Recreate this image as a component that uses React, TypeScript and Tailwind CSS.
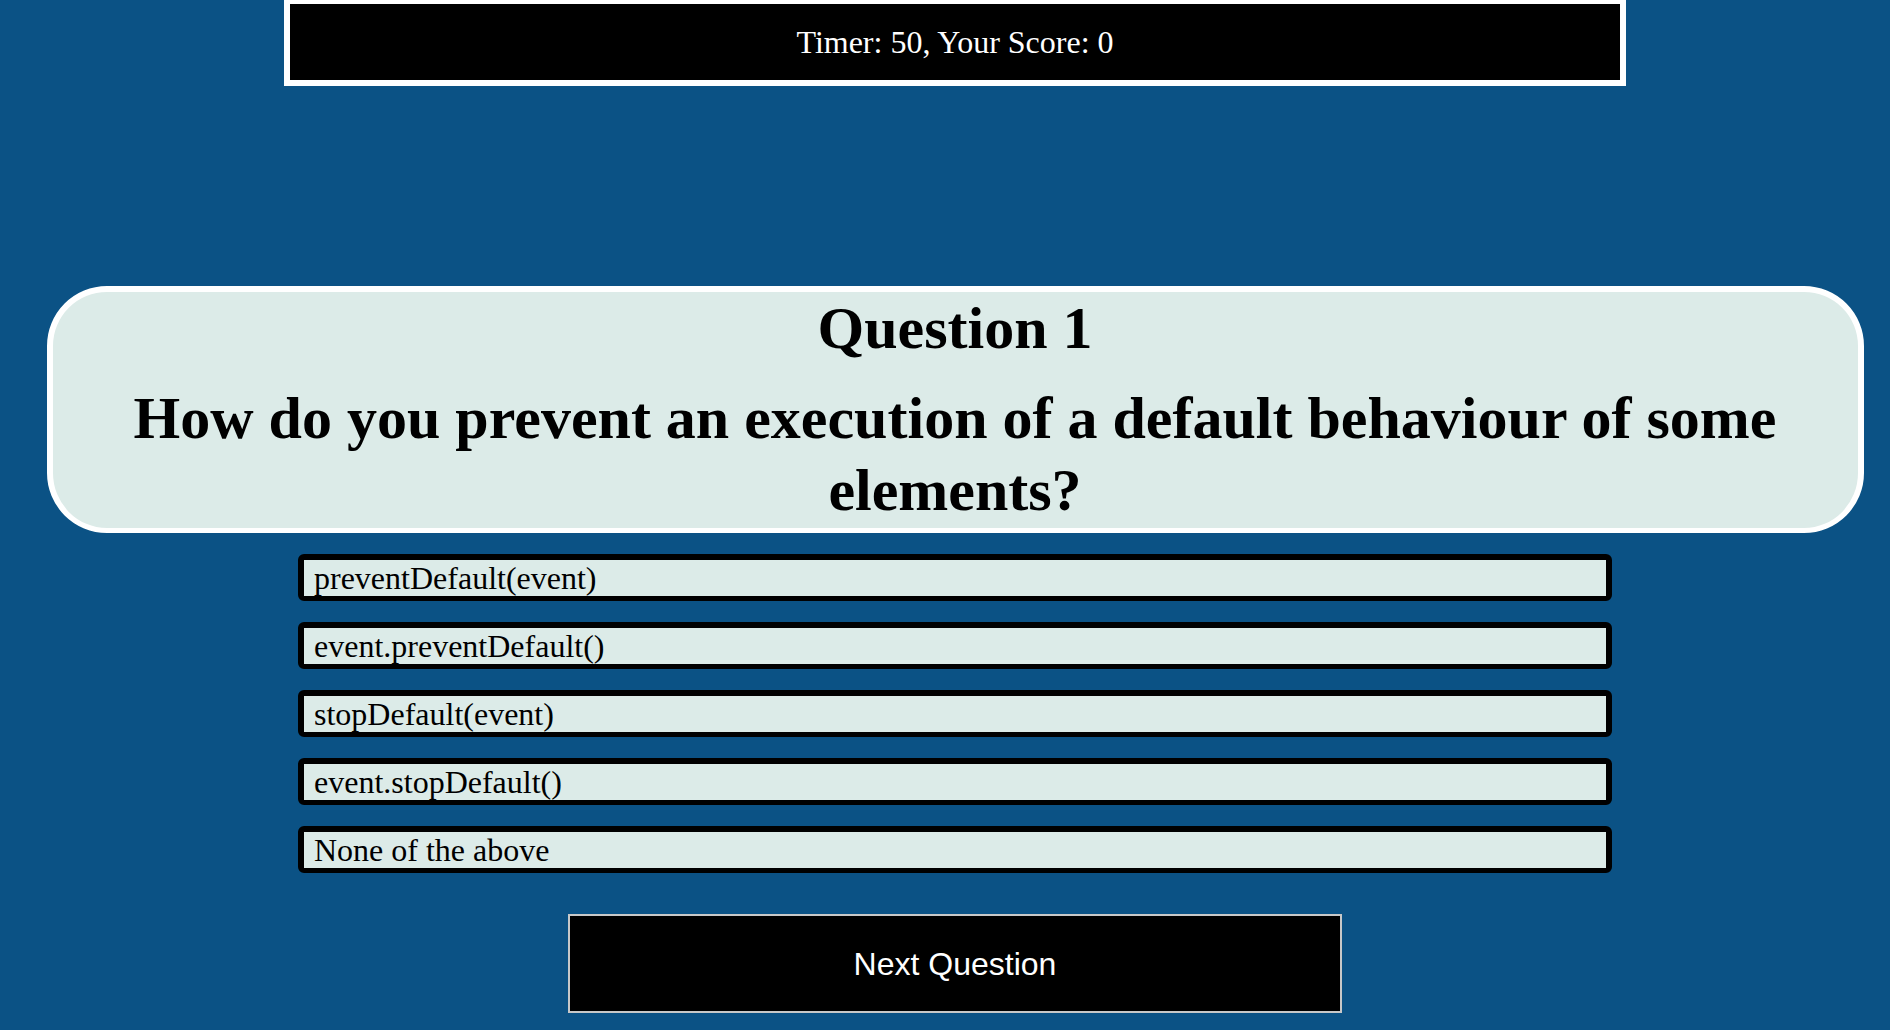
import React from "react";

const options = [
  "preventDefault(event)",
  "event.preventDefault()",
  "stopDefault(event)",
  "event.stopDefault()",
  "None of the above",
];

export default function App() {
  return (
    <div className="min-h-screen w-full bg-[#0b5285] pl-[20px] font-['Liberation_Serif','Times_New_Roman',serif]">
      <div className="flex flex-col items-center">
        <div className="flex h-[86px] w-[1342px] items-center justify-center border-[6px] border-t-4 border-white bg-black text-[32px] leading-[36px] text-white">
          Timer: 50, Your Score: 0
        </div>

        <div className="mt-[200px] flex h-[247px] w-[1817px] flex-col items-center rounded-[60px] border-[6px] border-b-[5px] border-white bg-[#dcebe8] text-black">
          <h1 className="text-center text-[60px] font-bold leading-[72px]">Question 1</h1>
          <h2 className="mt-[18px] px-[20px] text-center text-[60px] font-bold leading-[72px]">
            How do you prevent an execution of a default behaviour of some elements?
          </h2>
        </div>

        <div className="mt-[21px] flex w-[1314px] flex-col gap-[21px]">
          {options.map((o) => (
            <div
              key={o}
              className="h-[47px] rounded-[6px] border-[6px] border-b-[5px] border-black bg-[#dcebe8] pl-[10px] text-[32px] leading-[36px] text-black"
            >
              {o}
            </div>
          ))}
        </div>

        <button className="mt-[41px] flex h-[99px] w-[774px] items-center justify-center border-2 border-[#c8c8c8] bg-black font-['Liberation_Sans',Arial,sans-serif] text-[32px] text-white">
          Next Question
        </button>
      </div>
    </div>
  );
}
